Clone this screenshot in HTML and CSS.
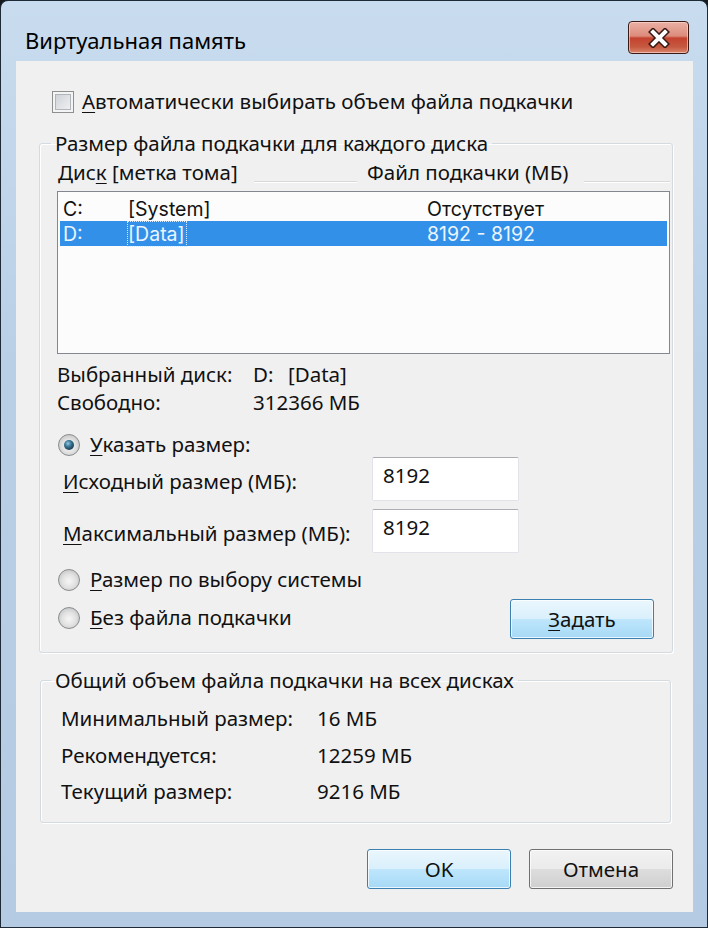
FILE: index.html
```html
<!DOCTYPE html>
<html lang="ru">

<head>
    <meta charset="UTF-8">
    <meta name="viewport" content="width=device-width, initial-scale=1.0">
    <title>Виртуальная память</title>
    <link rel="stylesheet" href="styles.css">
</head>

<body>
    <div class="window">
        <div class="titlebar">
            <span class="title">Виртуальная память</span>
            <button class="close-btn" aria-label="Закрыть">
                <svg width="26" height="20" viewBox="0 0 26 20">
                    <path d="M7 4 L19 16 M19 4 L7 16" stroke="#3a1812" stroke-width="7" stroke-linecap="square" fill="none"/>
                    <path d="M7 4 L19 16 M19 4 L7 16" stroke="#ffffff" stroke-width="4" stroke-linecap="square" fill="none"/>
                </svg>
            </button>
        </div>

        <div class="client">
            <label class="check-row">
                <span class="checkbox"></span>
                <span><u>А</u>втоматически выбирать объем файла подкачки</span>
            </label>

            <fieldset class="group group-disks">
                <legend>Размер файла подкачки для каждого диска</legend>

                <div class="list-header">
                    <div class="header-cell first">
                        <span>Дис<u>к</u> [метка тома]</span>
                        <span class="header-line"></span>
                    </div>
                    <div class="header-cell">
                        <span>Файл подкачки (МБ)</span>
                        <span class="header-line"></span>
                    </div>
                </div>

                <div class="listbox">
                    <div class="list-row">
                        <span class="cell-letter">C:</span>
                        <span class="cell-label">[System]</span>
                        <span class="cell-size">Отсутствует</span>
                    </div>
                    <div class="list-row selected">
                        <span class="cell-letter">D:</span>
                        <span class="cell-label"><span class="focus-box">[Data]</span></span>
                        <span class="cell-size">8192 - 8192</span>
                    </div>
                </div>

                <div class="info-row first">
                    <span class="info-label">Выбранный диск:</span>
                    <span class="info-letter">D:</span>
                    <span>[Data]</span>
                </div>
                <div class="info-row">
                    <span class="info-label">Свободно:</span>
                    <span>312366 МБ</span>
                </div>

                <label class="radio-row custom">
                    <span class="radio checked"></span>
                    <span><u>У</u>казать размер:</span>
                </label>

                <div class="size-row">
                    <span class="size-label"><u>И</u>сходный размер (МБ):</span>
                    <input type="text" class="size-input" value="8192">
                </div>
                <div class="size-row second">
                    <span class="size-label"><u>М</u>аксимальный размер (МБ):</span>
                    <input type="text" class="size-input" value="8192">
                </div>

                <div class="bottom-row">
                    <div class="radio-list">
                        <label class="radio-row">
                            <span class="radio"></span>
                            <span><u>Р</u>азмер по выбору системы</span>
                        </label>
                        <label class="radio-row">
                            <span class="radio"></span>
                            <span><u>Б</u>ез файла подкачки</span>
                        </label>
                    </div>
                    <button class="win-btn active set-btn"><u>З</u>адать</button>
                </div>
            </fieldset>

            <fieldset class="group group-total">
                <legend>Общий объем файла подкачки на всех дисках</legend>
                <div class="total-row first">
                    <span class="total-label">Минимальный размер:</span>
                    <span>16 МБ</span>
                </div>
                <div class="total-row">
                    <span class="total-label">Рекомендуется:</span>
                    <span>12259 МБ</span>
                </div>
                <div class="total-row">
                    <span class="total-label">Текущий размер:</span>
                    <span>9216 МБ</span>
                </div>
            </fieldset>

            <div class="dialog-buttons">
                <button class="win-btn active">OK</button>
                <button class="win-btn">Отмена</button>
            </div>
        </div>
    </div>
</body>

</html>
```

FILE: styles.css
```css
body {
    margin: 0;
    padding: 0;
    background-color: #161a1f;
    font-family: "Noto Sans", "Open Sans", sans-serif;
    font-size: 20.5px;
    line-height: 1.15;
    color: #111;
}

u {
    text-decoration-thickness: 1px;
    text-underline-offset: 3px;
}

.window {
    width: 708px;
    height: 928px;
    box-sizing: border-box;
    border: 1px solid #1e2a36;
    border-radius: 8px 8px 0 0;
    background: linear-gradient(to bottom, #c9dcef, #b8cfe6 40%, #b4cbe3);
    display: flex;
    flex-direction: column;
}

/* barre de titre */
.titlebar {
    height: 60px;
    display: flex;
    align-items: flex-start;
    padding: 0 18px 0 24px;
}

.title {
    margin-top: 27px;
    line-height: 24px;
    font-size: 22px;
    color: #000;
}

.close-btn {
    margin-left: auto;
    margin-top: 20px;
    width: 61px;
    height: 33px;
    padding: 0;
    border: 1px solid #3b1a16;
    border-radius: 4px;
    background: linear-gradient(to bottom, #eab0a4 0%, #dd8c7c 45%, #c4432f 52%, #c65840 80%, #d9876d 100%);
    box-shadow: inset 0 0 0 1px rgba(255, 220, 210, 0.6);
    display: flex;
    align-items: center;
    justify-content: center;
}

/* zone cliente */
.client {
    margin: 0 14px 0 15px;
    height: 851px;
    box-sizing: border-box;
    background-color: #f0f0f0;
    padding-top: 30px;
    display: flex;
    flex-direction: column;
}

.check-row {
    display: flex;
    align-items: center;
    gap: 8px;
    height: 22px;
    margin-left: 36px;
}

.checkbox {
    width: 20px;
    height: 20px;
    border: 1px solid #8e8f8f;
    background: linear-gradient(135deg, #c9cdd3, #f5f5f5);
    box-shadow: inset 0 0 0 2px #f4f4f4, inset 0 0 0 3px #b0b5bb;
}

/* cadres de groupe */
.group {
    box-sizing: border-box;
    border: 1px solid #d3dbe0;
    border-radius: 3px;
    box-shadow: inset 1px 1px 0 #fff, 1px 1px 0 #fff;
    min-inline-size: 0;
    margin-right: 0;
}

.group legend {
    line-height: 24px;
    padding: 0 4px;
}

.group-disks {
    margin: 18px 0 0 23px;
    width: 634px;
    padding: 0 1px 13px 17px;
}

.group-disks legend {
    margin-left: -6px;
}

.group-total {
    margin: 15px 0 0 24px;
    width: 631px;
    padding: 0 1px 18px 20px;
}

.group-total legend {
    margin-left: -10px;
}

/* liste des disques */
.list-header {
    margin-top: 6px;
    height: 24px;
    display: grid;
    grid-template-columns: 309px 1fr;
    padding-left: 1px;
}

.header-cell {
    display: flex;
    align-items: center;
}

.header-line {
    flex: 1;
    align-self: flex-end;
    margin: 0 10px 2px 16px;
    border-top: 1px solid #d8d8d8;
    border-bottom: 1px solid #fff;
}

.header-cell:last-child .header-line {
    margin-right: 1px;
}

.listbox {
    margin-top: 6px;
    height: 163px;
    width: 613px;
    box-sizing: border-box;
    border: 1px solid #828790;
    background-color: #fcfcfc;
    padding: 4px 2px;
    font-family: Inter, "Noto Sans", sans-serif;
    font-size: 19.5px;
}

.list-row {
    height: 25px;
    line-height: 22px;
    display: flex;
    align-items: center;
    padding-left: 3px;
}

.list-row.selected {
    background-color: #3390e8;
    color: #eaf5ff;
}

.cell-letter {
    width: 65px;
}

.cell-label {
    width: 299px;
}

.focus-box {
    border: 1px dotted #d6ebff;
    margin-left: -1px;
    padding: 0 1px 0 0;
}

/* informations sur le disque */
.info-row {
    height: 24px;
    display: flex;
    align-items: center;
    margin-top: 4px;
}

.info-row.first {
    margin-top: 9px;
}

.info-label {
    width: 196px;
}

.info-letter {
    width: 35px;
}

/* boutons radio */
.radio-row {
    height: 24px;
    display: flex;
    align-items: center;
    gap: 10px;
    padding-left: 1px;
}

.radio-row.custom {
    margin-top: 18px;
}

.radio {
    width: 20px;
    height: 20px;
    border-radius: 50%;
    border: 1px solid #8a8c8e;
    background: radial-gradient(circle at 50% 55%, #f6f6f6 0, #e2e2e2 45%, #c4c6c8 80%, #eeeeee 100%);
    display: flex;
    align-items: center;
    justify-content: center;
}

.radio.checked::after {
    content: "";
    width: 10px;
    height: 10px;
    border-radius: 50%;
    background: radial-gradient(circle at 40% 35%, #8fcbe6 0, #3c7896 35%, #1a3b4f 75%, #26485c 100%);
}

.size-row {
    height: 44px;
    display: flex;
    align-items: center;
    padding-left: 6px;
}

.size-row.second {
    margin-top: 8px;
}

.size-label {
    width: 309px;
    padding-top: 6px;
}

.size-input {
    width: 147px;
    height: 44px;
    box-sizing: border-box;
    border: 1px solid #e2e3ea;
    border-top-color: #abadb3;
    border-radius: 2px;
    background-color: #fff;
    font-family: inherit;
    font-size: 20.5px;
    color: #111;
    padding: 0 0 8px 10px;
    line-height: 24px;
}

.bottom-row {
    margin-top: 15px;
    display: flex;
    align-items: flex-end;
    justify-content: space-between;
}

.radio-list {
    display: flex;
    flex-direction: column;
    gap: 14px;
    padding-bottom: 9px;
}

/* boutons */
.win-btn {
    width: 144px;
    height: 40px;
    border: 1px solid #707070;
    border-radius: 3px;
    background: linear-gradient(to bottom, #f2f2f2 0%, #ebebeb 50%, #dddddd 51%, #cfcfcf 100%);
    box-shadow: inset 0 0 0 1px rgba(255, 255, 255, 0.75);
    font-family: inherit;
    font-size: 20.5px;
    color: #111;
    padding: 0;
}

.win-btn.active {
    border-color: #3c7fb1;
    background: linear-gradient(to bottom, #eaf6fd 0%, #d9f0fc 50%, #bee6fd 51%, #a7d9f5 100%);
}

.set-btn {
    margin-right: 17px;
}

/* totaux */
.total-row {
    height: 24px;
    display: flex;
    align-items: center;
    margin-top: 12px;
}

.total-row.first {
    margin-top: 15px;
}

.total-row.first + .total-row {
    margin-top: 13px;
}

.total-label {
    width: 256px;
}

.dialog-buttons {
    margin-top: 26px;
    display: flex;
    justify-content: flex-end;
    gap: 18px;
    padding-right: 20px;
}
```
